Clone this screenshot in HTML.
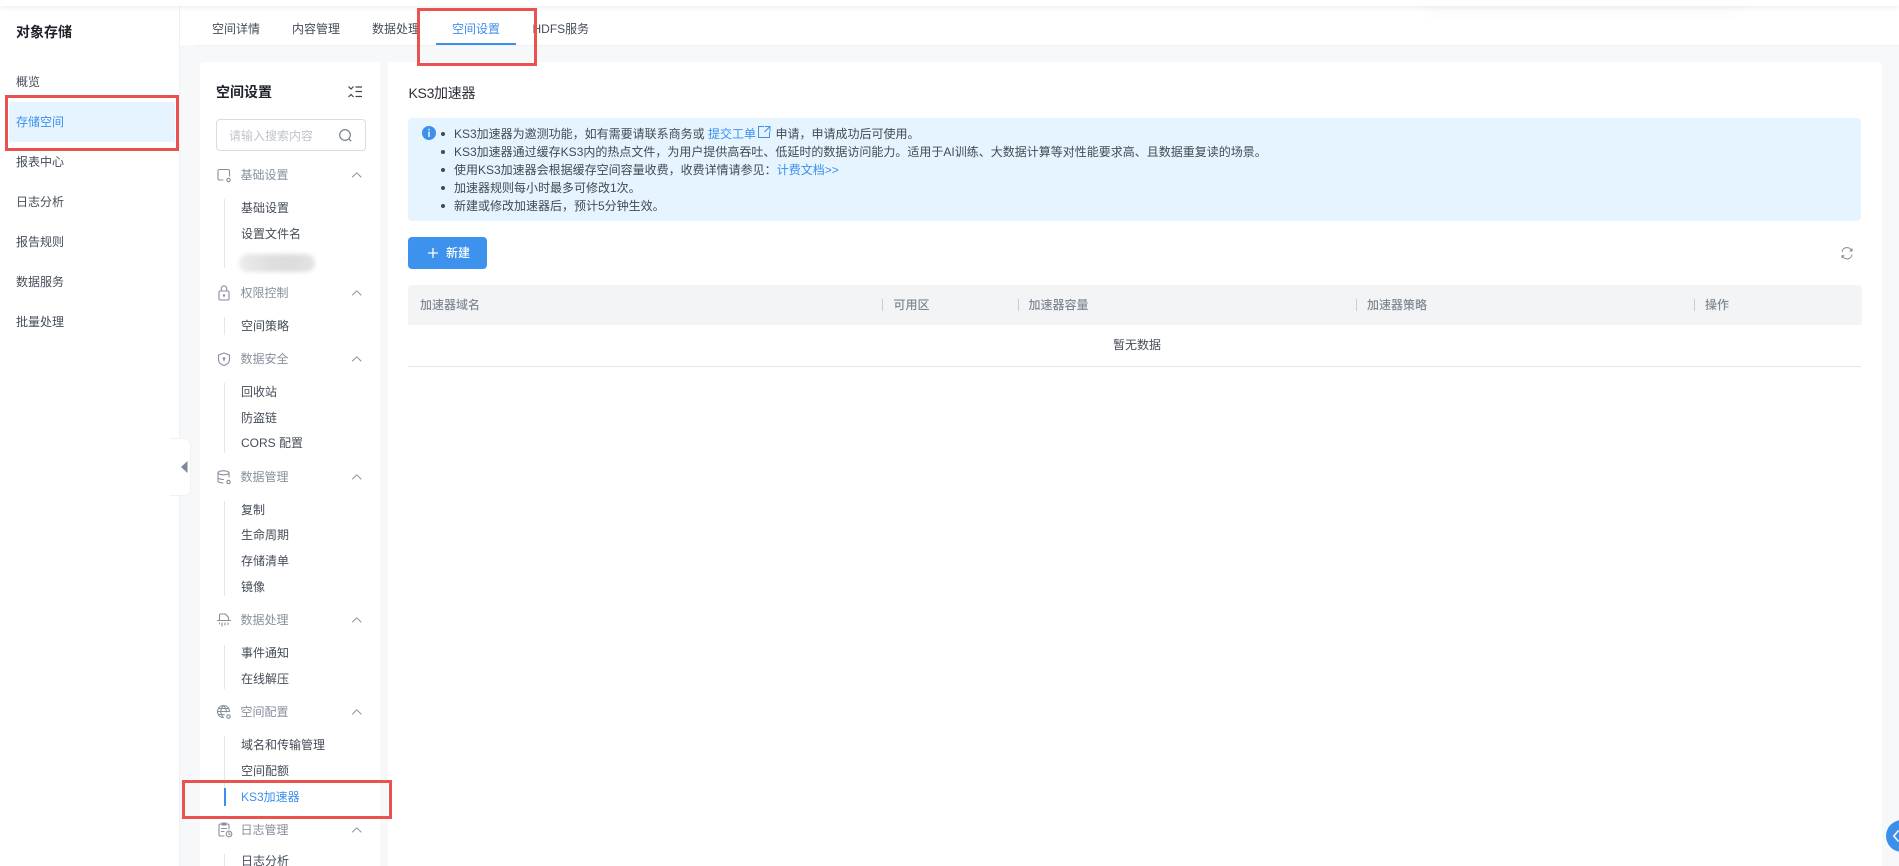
<!DOCTYPE html>
<html lang="zh-CN"><head><meta charset="utf-8"><title>对象存储</title>
<style>
html,body{margin:0;padding:0;width:1899px;height:866px;overflow:hidden;background:#f7f8fa}
body{position:relative;font-family:"Liberation Sans","Noto Sans CJK SC",sans-serif;font-size:12px;color:#454d58}
.a{position:absolute}
.t{position:absolute;line-height:20px;height:20px;white-space:nowrap;font-size:12px}
.m{left:16px;color:#454d58}
.g{left:240.5px;color:#86909c}
.i{left:241px;color:#454d58}
.vl{position:absolute;left:224px;width:1px;background:#e5e6eb}
.red{position:absolute;border:3px solid #ea5250;box-sizing:border-box;z-index:20}
.sep{position:absolute;top:299px;width:1px;height:12px;background:#c9cdd4}
.th{position:absolute;top:295px;line-height:20px;color:#7f8994;font-size:12px;font-weight:500;white-space:nowrap}
.li{position:absolute;left:454px;line-height:18px;height:18px;color:#434a54;white-space:nowrap;font-size:12px}
.dot{position:absolute;left:441px;width:4px;height:4px;border-radius:50%;background:#434a54}
.b{color:#3d8fec}
svg{position:absolute;overflow:visible}
.ic{fill:none;stroke:#86909c;stroke-width:1.1;stroke-linecap:round;stroke-linejoin:round}
.ch{fill:none;stroke:#86909c;stroke-width:1;stroke-linecap:round;stroke-linejoin:round}
</style></head>
<body>
<!-- backgrounds -->
<div class="a" style="left:0;top:0;width:179px;height:866px;background:#fff;border-right:1px solid #f0f1f3;box-sizing:content-box"></div>
<div class="a" style="left:180px;top:6px;width:1719px;height:39px;background:#fff"></div>
<div class="a" style="left:196px;top:45px;width:1703px;height:1px;background:#eef0f2"></div>
<div class="a" style="left:1420px;top:-12px;width:325px;height:24px;background:rgba(0,0,0,.02);border-radius:14px;filter:blur(6px)"></div>
<div class="a" style="left:0;top:0;width:1899px;height:6px;background:#fff;box-shadow:0 1px 6px rgba(0,0,0,.09);z-index:3"></div>
<div class="a" style="left:200px;top:62px;width:180px;height:804px;background:#fff;border-radius:4px 4px 0 0"></div>
<div class="a" style="left:388px;top:62px;width:1494px;height:804px;background:#fff;border-radius:4px 4px 0 0"></div>

<!-- left sidebar -->
<div class="t" style="left:16px;top:22px;font-size:14px;font-weight:700;color:#1d2129">对象存储</div>
<div class="t m" style="top:71.5px">概览</div>
<div class="a" style="left:9px;top:102px;width:166px;height:40px;background:#e6f4ff;border-radius:2px"></div>
<div class="t m" style="top:111.5px;color:#3d8fec">存储空间</div>
<div class="t m" style="top:151.5px">报表中心</div>
<div class="t m" style="top:191.5px">日志分析</div>
<div class="t m" style="top:231.5px">报告规则</div>
<div class="t m" style="top:271.5px">数据服务</div>
<div class="t m" style="top:311.5px">批量处理</div>

<!-- toggle -->
<div class="a" style="left:170px;top:438px;width:21px;height:58px;background:#fff;border:1px solid #f0f1f3;border-left:none;border-radius:0 7px 7px 0;box-sizing:border-box"></div>
<svg style="left:0;top:0" width="1" height="1"><path d="M181 467l6.500-6v12z" fill="#7f8a99"/></svg>

<!-- tabs -->
<div class="t" style="left:212px;top:18.5px;color:#454d58">空间详情</div>
<div class="t" style="left:292px;top:18.5px;color:#454d58">内容管理</div>
<div class="t" style="left:372px;top:18.5px;color:#454d58">数据处理</div>
<div class="t" style="left:452px;top:18.5px;color:#3d8fec">空间设置</div>
<div class="t" style="left:532.5px;top:18.5px;color:#454d58">HDFS服务</div>
<div class="a" style="left:436px;top:43px;width:80px;height:2px;background:#3d8fec"></div>

<!-- settings panel -->
<div class="t" style="left:216px;top:82px;font-size:14px;font-weight:700;color:#1d2129">空间设置</div>
<svg style="left:348px;top:86px" width="14" height="12" fill="none" stroke="#3f4650" stroke-width="1.2"><path d="M0.5 0.5l2.5 2.500 2.500-2.500M0.5 11l2.500-2.500 2.500 2.500M7.500 1h6.500M7.500 5.500h6.500M7.500 10.500h6.500"/></svg>
<div class="a" style="left:216px;top:119px;width:150px;height:32px;border:1px solid #d9dce1;border-radius:4px;box-sizing:border-box"></div>
<div class="t" style="left:229px;top:126px;color:#c0c4cc">请输入搜索内容</div>
<svg style="left:339px;top:129px" width="14" height="14" fill="none" stroke="#6b7580" stroke-width="1.100"><circle cx="6" cy="6" r="5.300"/><path d="M9.800 9.800l2.400 2.400"/></svg>

<!-- group 1 -->
<svg class="ic" style="left:217px;top:168px" width="15" height="15"><path d="M6 12H2.500A1.500 1.500 0 0 1 1 10.500V3A1.500 1.500 0 0 1 2.500 1.500H11A1.500 1.500 0 0 1 12.500 3V8"/><circle cx="11.500" cy="12" r="1.700"/></svg>
<div class="t g" style="top:165px">基础设置</div>
<svg class="ch" style="left:352px;top:172px" width="10" height="6"><path d="M0.500 5L4.750 0.800 9 5"/></svg>
<div class="vl" style="top:199px;height:69px"></div>
<div class="t i" style="top:197.500px">基础设置</div>
<div class="t i" style="top:223.500px">设置文件名</div>
<div class="a" style="left:239px;top:254px;width:76px;height:18px;background:linear-gradient(90deg,#ececec,#dfdfdf 40%,#dcdcdc 70%,#e4e4e4);border-radius:10px;filter:blur(2px)"></div>

<!-- group 2 -->
<svg class="ic" style="left:218px;top:285px" width="13" height="16"><rect x="1" y="6" width="10" height="9" rx="1.500"/><path d="M3.300 6V3.500a2.700 2.700 0 0 1 5.400 0V6"/><circle cx="6" cy="10.500" r=".7"/></svg>
<div class="t g" style="top:282.700px">权限控制</div>
<svg class="ch" style="left:352px;top:290px" width="10" height="6"><path d="M0.500 5L4.750 0.800 9 5"/></svg>
<div class="vl" style="top:317px;height:18px"></div>
<div class="t i" style="top:315.500px">空间策略</div>

<!-- group 3 -->
<svg class="ic" style="left:217px;top:352px" width="15" height="15"><path d="M7 1l5.500 2v4.500c0 3-2.500 5-5.500 6-3-1-5.500-3-5.500-6V3z"/><circle cx="7" cy="6.500" r=".8"/><path d="M7 7.500V9"/></svg>
<div class="t g" style="top:349px">数据安全</div>
<svg class="ch" style="left:352px;top:356px" width="10" height="6"><path d="M0.500 5L4.750 0.800 9 5"/></svg>
<div class="vl" style="top:383px;height:70px"></div>
<div class="t i" style="top:382px">回收站</div>
<div class="t i" style="top:407.700px">防盗链</div>
<div class="t i" style="top:433.200px">CORS 配置</div>

<!-- group 4 -->
<svg class="ic" style="left:217px;top:469.700px" width="15" height="15"><ellipse cx="6.500" cy="2.800" rx="5.500" ry="2"/><path d="M1 2.800v8.200c0 1.100 2.300 2 5 2M12 2.800V7M1 7.500c0 1.100 2.500 2 5.500 2"/><circle cx="11.500" cy="12" r="1.700"/></svg>
<div class="t g" style="top:466.700px">数据管理</div>
<svg class="ch" style="left:352px;top:473.700px" width="10" height="6"><path d="M0.500 5L4.750 0.800 9 5"/></svg>
<div class="vl" style="top:501px;height:95px"></div>
<div class="t i" style="top:499.800px">复制</div>
<div class="t i" style="top:525.300px">生命周期</div>
<div class="t i" style="top:551.100px">存储清单</div>
<div class="t i" style="top:577.200px">镜像</div>

<!-- group 5 -->
<svg class="ic" style="left:217px;top:613.400px" width="15" height="14"><path d="M2.500 7.500V2.500A1.500 1.500 0 0 1 4 1h4.500l3 3.500v3M0.500 7.500h13M2.500 10v1M5 10v3M8 10v2M11 10v1.500"/></svg>
<div class="t g" style="top:610.400px">数据处理</div>
<svg class="ch" style="left:352px;top:617.400px" width="10" height="6"><path d="M0.500 5L4.750 0.800 9 5"/></svg>
<div class="vl" style="top:645px;height:44px"></div>
<div class="t i" style="top:643.200px">事件通知</div>
<div class="t i" style="top:669px">在线解压</div>

<!-- group 6 -->
<svg class="ic" style="left:217px;top:705px" width="15" height="15"><path d="M6.500 12.500a6 6 0 1 1 6-6M.5 6.500h12M6.500.5c-3.500 3.500-3.500 8.500 0 12M6.500.5c2.500 2.500 3 5 3 6.500M1.300 3.500h10.400M1.300 9.500h6"/><circle cx="11.500" cy="11.500" r="1.700"/></svg>
<div class="t g" style="top:702.200px">空间配置</div>
<svg class="ch" style="left:352px;top:709px" width="10" height="6"><path d="M0.500 5L4.750 0.800 9 5"/></svg>
<div class="vl" style="top:736px;height:52px"></div>
<div class="a" style="left:224px;top:788px;width:2px;height:18px;background:#3d8fec"></div>
<div class="t i" style="top:734.700px">域名和传输管理</div>
<div class="t i" style="top:760.800px">空间配额</div>
<div class="t i" style="top:787px;color:#3d8fec">KS3加速器</div>

<!-- group 7 -->
<svg class="ic" style="left:218px;top:822.400px" width="15" height="16"><path d="M6 14H2.500A1.500 1.500 0 0 1 1 12.500V3.500A1.500 1.500 0 0 1 2.500 2H9.500A1.500 1.500 0 0 1 11 3.500V7M4 1h4v2H4zM3.500 6.500h5M3.500 9.500h2.500"/><circle cx="11" cy="12" r="2.800"/><path d="M11 10.700V12l1 .6"/></svg>
<div class="t g" style="top:820.100px">日志管理</div>
<svg class="ch" style="left:352px;top:827px" width="10" height="6"><path d="M0.500 5L4.750 0.800 9 5"/></svg>
<div class="vl" style="top:854px;height:12px"></div>
<div class="t i" style="top:851px">日志分析</div>

<!-- main -->
<div class="t" style="left:408.500px;top:82.500px;font-size:14px;color:#2b3038;letter-spacing:-.3px">KS3加速器</div>
<div class="a" style="left:408px;top:118px;width:1453px;height:103px;background:#e6f4ff;border-radius:4px"></div>
<svg style="left:422px;top:126px" width="14" height="14"><circle cx="7" cy="7" r="7" fill="#3d8fec"/><rect x="6.300" y="2.800" width="1.400" height="1.500" fill="#fff"/><rect x="6.300" y="5.500" width="1.400" height="5.500" fill="#fff"/></svg>
<div class="dot" style="top:131.500px"></div>
<div class="dot" style="top:149.500px"></div>
<div class="dot" style="top:167.500px"></div>
<div class="dot" style="top:185.500px"></div>
<div class="dot" style="top:203.500px"></div>
<div class="li" style="top:124.500px">KS3加速器为邀测功能，如有需要请联系商务或</div>
<div class="li b" style="left:708px;top:124.500px">提交工单</div>
<svg style="left:758px;top:126px" width="13" height="12" fill="none" stroke="#3d8fec" stroke-width="1"><path d="M6 .5H.5v11h11V6M7 .5h5v5M12 .5L6.500 6"/></svg>
<div class="li" style="left:775.500px;top:124.500px">申请，申请成功后可使用。</div>
<div class="li" style="top:142.700px">KS3加速器通过缓存KS3内的热点文件，为用户提供高吞吐、低延时的数据访问能力。适用于AI训练、大数据计算等对性能要求高、且数据重复读的场景。</div>
<div class="li" style="top:160.700px">使用KS3加速器会根据缓存空间容量收费，收费详情请参见：<span class="b">计费文档&gt;&gt;</span></div>
<div class="li" style="top:178.700px">加速器规则每小时最多可修改1次。</div>
<div class="li" style="top:196.700px">新建或修改加速器后，预计5分钟生效。</div>

<div class="a" style="left:408px;top:237px;width:79px;height:32px;background:#3d92ee;border-radius:4px"></div>
<svg style="left:428px;top:248px" width="10" height="10" stroke="#fff" stroke-width="1.300"><path d="M5 0v10M0 5h10"/></svg>
<div class="t" style="left:446px;top:243px;color:#fff;font-weight:500">新建</div>

<svg style="left:1841px;top:247px" width="12" height="13" fill="none" stroke="#7f8994" stroke-width="1"><path d="M1 5A5 5 0 0 1 10.500 3.500M11 7.500A5 5 0 0 1 1.500 9"/><path d="M11 1.500v2.500H8.500M1 11V8.800h2.500"/></svg>

<div class="a" style="left:408px;top:285px;width:1454px;height:40px;background:#f3f4f6;border-radius:4px 4px 0 0"></div>
<div class="th" style="left:420px">加速器域名</div>
<div class="sep" style="left:882px"></div>
<div class="th" style="left:893.500px">可用区</div>
<div class="sep" style="left:1018px"></div>
<div class="th" style="left:1028.500px">加速器容量</div>
<div class="sep" style="left:1356px"></div>
<div class="th" style="left:1367px">加速器策略</div>
<div class="sep" style="left:1694px"></div>
<div class="th" style="left:1705px">操作</div>
<div class="t" style="left:1113px;top:334.500px;color:#454d58">暂无数据</div>
<div class="a" style="left:408px;top:365.500px;width:1453px;height:1px;background:#e5e6eb"></div>

<!-- floater -->
<div class="a" style="left:1886px;top:820px;width:32px;height:32px;border-radius:50%;background:#3d8fec"></div>
<svg style="left:1893px;top:830px" width="6" height="12" fill="none" stroke="#fff" stroke-width="1.500"><path d="M5.500 .5L.8 6l4.700 5.500"/></svg>

<!-- red annotations -->
<div class="red" style="left:5px;top:95px;width:174px;height:56px"></div>
<div class="red" style="left:417px;top:8px;width:120px;height:58px"></div>
<div class="red" style="left:182px;top:780px;width:210px;height:39px"></div>
</body></html>
